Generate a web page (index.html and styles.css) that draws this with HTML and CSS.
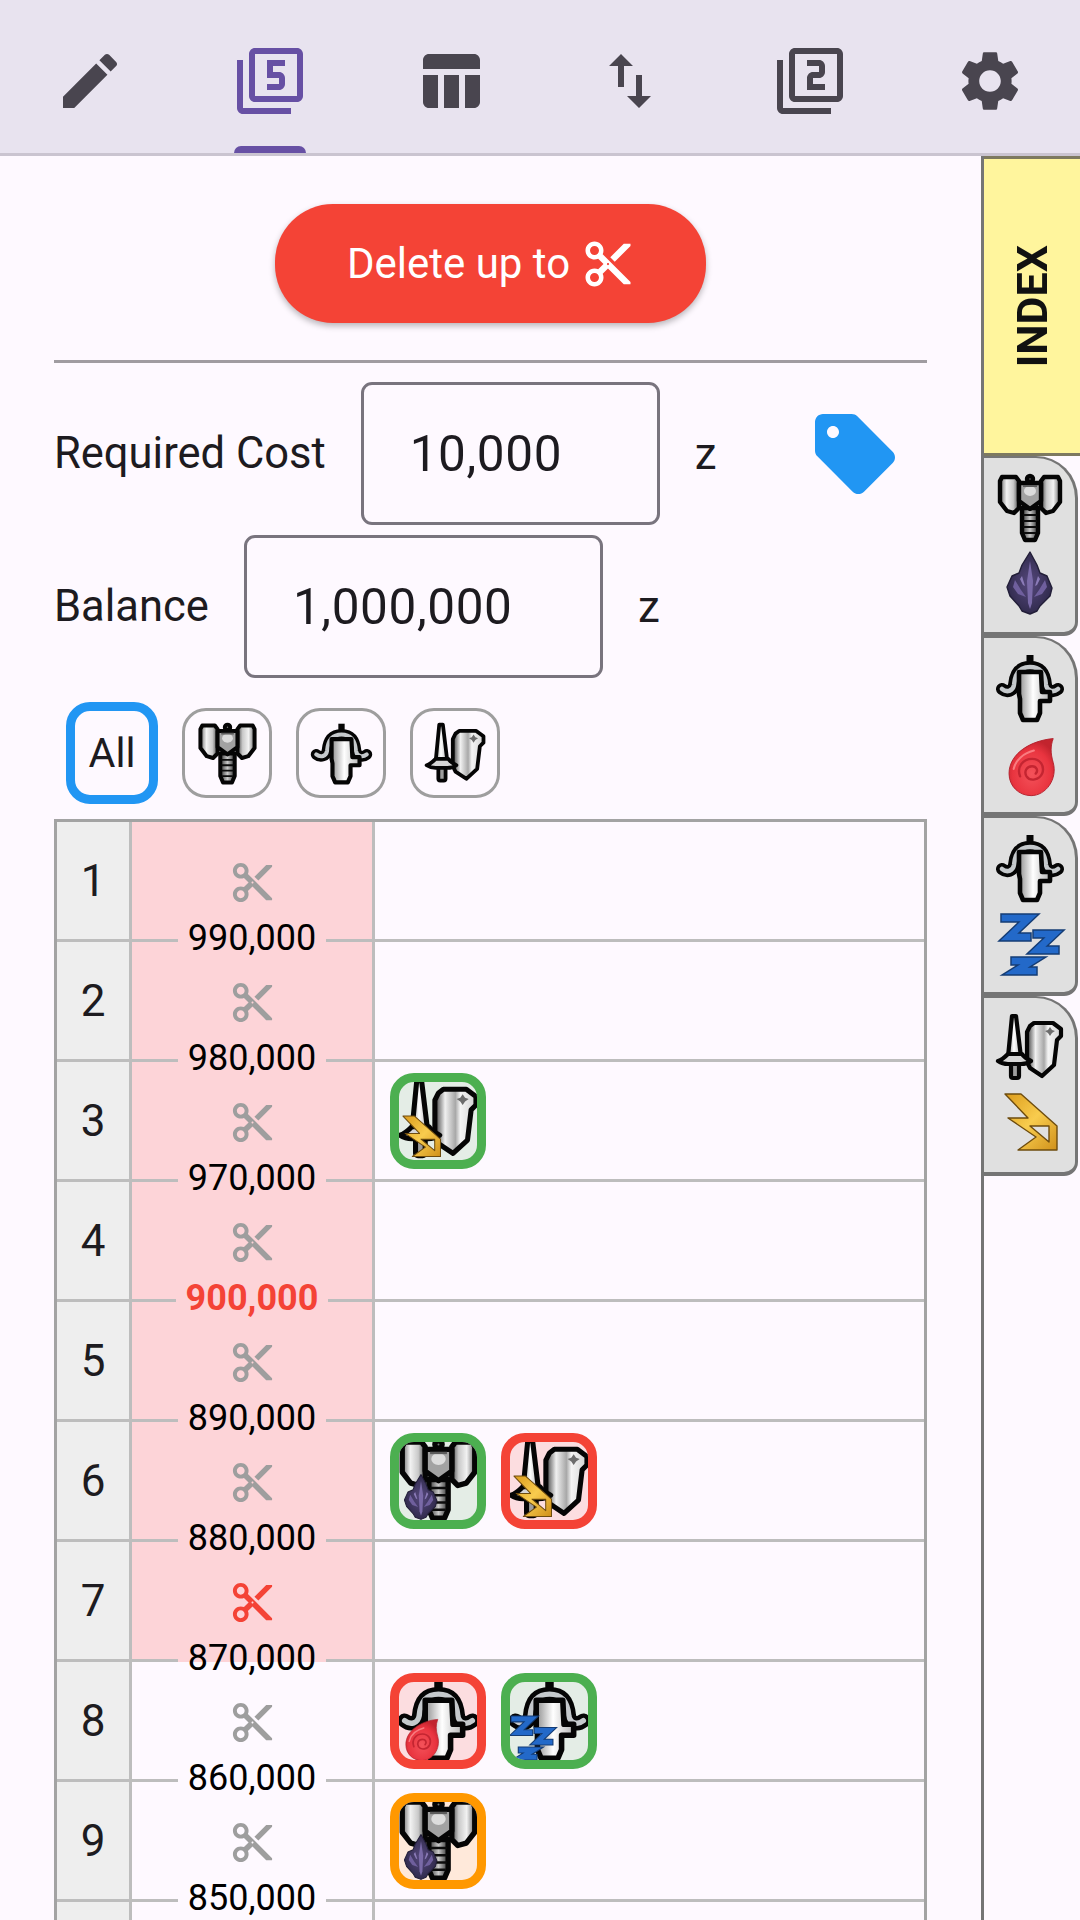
FILE: index.html
```html
<!DOCTYPE html>
<html lang="en">
<head>
<meta charset="utf-8">
<title>Delete up to</title>
<link rel="stylesheet" href="styles.css">
</head>
<body>
<svg class="defs" width="0" height="0" aria-hidden="true">
  <defs>
    <linearGradient id="gL" x1="0" x2="1" y1="0" y2="0"><stop offset="0" stop-color="#6a6a6a"/><stop offset=".35" stop-color="#f2f2f2"/><stop offset=".7" stop-color="#c9c9c9"/><stop offset="1" stop-color="#4a4a4a"/></linearGradient>
    <linearGradient id="gR" x1="1" x2="0" y1="0" y2="0"><stop offset="0" stop-color="#6a6a6a"/><stop offset=".35" stop-color="#f2f2f2"/><stop offset=".7" stop-color="#c9c9c9"/><stop offset="1" stop-color="#4a4a4a"/></linearGradient>
    <linearGradient id="gC" x1="0" x2="1" y1="0" y2="0"><stop offset="0" stop-color="#333"/><stop offset=".5" stop-color="#c8c8c8"/><stop offset="1" stop-color="#2c2c2c"/></linearGradient>
    <linearGradient id="gW" x1="0" x2="1" y1="0" y2="0"><stop offset="0" stop-color="#8f8f8f"/><stop offset=".45" stop-color="#fff"/><stop offset="1" stop-color="#b5b5b5"/></linearGradient>
    <linearGradient id="gS" x1="0" x2="1" y1="0" y2="0"><stop offset="0" stop-color="#3a3a3a"/><stop offset=".25" stop-color="#f0f0f0"/><stop offset=".5" stop-color="#a8a8a8"/><stop offset=".62" stop-color="#f4f4f4"/><stop offset="1" stop-color="#d2d2d2"/></linearGradient>
    <linearGradient id="gG" x1="0" x2="1" y1="0" y2="1"><stop offset="0" stop-color="#dc9c1c"/><stop offset=".5" stop-color="#f8cc4e"/><stop offset="1" stop-color="#d0901a"/></linearGradient>
    <radialGradient id="gF" cx=".5" cy=".62" r=".6"><stop offset="0" stop-color="#f4525a"/><stop offset=".7" stop-color="#e9343f"/><stop offset="1" stop-color="#c2242e"/></radialGradient>
    <radialGradient id="gK" cx=".5" cy=".5" r=".6"><stop offset="0" stop-color="#55487c"/><stop offset="1" stop-color="#2a2544"/></radialGradient>

    <symbol id="hammer" viewBox="0 0 72 72">
      <g stroke="#050505" stroke-width="4.4" stroke-linejoin="round">
        <path d="M28 36h16v25l-3 7h-10l-3-7z" fill="url(#gC)"/>
        <path d="M29 43h14M29 49h14M29 55h14M30 61h12" fill="none" stroke-width="2" stroke="#0c0c0c"/>
        <path d="M8 5h14l3 4v27l-5 5-7-2-7-9V9z" fill="url(#gL)"/>
        <path d="M64 5H50l-3 4v27l5 5 7-2 7-9V9z" fill="url(#gR)"/>
        <circle cx="36" cy="7" r="3" fill="#777"/>
        <path d="M25 11h22v18l-11 8-11-8z" fill="#a2a2a2"/>
      </g>
      <ellipse cx="36" cy="19" rx="6" ry="5" fill="#dcdcdc"/>
      <path d="M29 15h14v-2H29z" fill="#5c5c5c"/>
    </symbol>

    <symbol id="crossbow" viewBox="0 0 72 72">
      <path d="M36 3v14" stroke="#050505" stroke-width="7" fill="none"/>
      <path d="M8 37c5 4 11 2 12-4 1-12 6-18 16-18s15 6 16 18c1 6 7 8 12 4" fill="none" stroke="#050505" stroke-width="12" stroke-linecap="round"/>
      <path d="M8 37c5 4 11 2 12-4 1-12 6-18 16-18s15 6 16 18c1 6 7 8 12 4" fill="none" stroke="#c5c9cc" stroke-width="4.5" stroke-linecap="round"/>
      <path d="M25 20h22l1 20h8v9H46v12l-3 7H29l-3-7V47l-1-5z" fill="url(#gW)" stroke="#050505" stroke-width="4.6" stroke-linejoin="round"/>
    </symbol>

    <symbol id="swordshield" viewBox="0 0 72 72">
      <g stroke="#050505" stroke-width="4.2" stroke-linejoin="round">
        <path d="M36 14l4-3h19l8 6v7l-4 4-3 25-12 11-12-8-3-6V20z" fill="url(#gS)"/>
        <path d="M18 4h4l5 41H14z" fill="url(#gW)"/>
        <rect x="17" y="51" width="8" height="15" rx="2" fill="#9d9d9d"/>
        <path d="M4 49c4-1 8-5 10-7h14c2 3 5 5 9 7-4 3-8 3-10 3H14c-3 0-7-1-10-3z" fill="#d6d6d6"/>
      </g>
      <path d="M56 15l2 3 3 1-3 2-2 3-2-3-3-2 3-1z" fill="#6d6d6d"/>
    </symbol>

    <symbol id="crystal" viewBox="0 0 72 72">
      <path d="M36 5l7 13 3 8 7 3 5 12-2 8-10 10-3 5-7 3-8-3-3-5-9-10-3-9 5-11 7-3 3-8z" fill="url(#gK)" stroke="#221e38" stroke-width="1.4" stroke-linejoin="round"/>
      <path d="M36 14l3 20-1 22-2 6-2-6-1-22z" fill="#7a6aa8"/>
      <path d="M21 33l6 10 5 7-8-3-5-7zM51 33l-6 10-5 7 8-3 5-7z" fill="#6f5f9d"/>
      <path d="M28 29l3 10-2-1-3-6zM44 29l-3 10 2-1 3-6z" fill="#8b7bb8"/>
    </symbol>

    <symbol id="fire" viewBox="0 0 72 72">
      <g transform="translate(4 7) scale(.92)">
        <path d="M60 5c-3 8-3 16 0 26 5 18-8 36-24 36-13 0-24-10-24-24C12 21 36 7 60 5z" fill="url(#gF)" stroke="#b21f2a" stroke-width="1"/>
        <path d="M24 46c-4-10 3-19 13-19 9 0 14 8 11 16-3 7-13 9-17 3-3-5 0-11 6-11 5 0 7 5 4 8" fill="none" stroke="#c42531" stroke-width="2.6" stroke-linecap="round"/>
        <path d="M17 38c2-9 10-17 22-20" fill="none" stroke="#f97c80" stroke-width="2.2" stroke-linecap="round"/>
      </g>
    </symbol>

    <symbol id="sleep" viewBox="0 0 72 72">
      <g fill="none" stroke-linejoin="miter" stroke-linecap="square">
        <path d="M11 11h24L15 30h18M43 27h17L43 43h18M21 54h17L22 64h17" stroke="#143c74" stroke-width="9.5"/>
        <path d="M11 11h24L15 30h18M43 27h17L43 43h18M21 54h17L22 64h17" stroke="#2369c9" stroke-width="6.6"/>
      </g>
    </symbol>

    <symbol id="bolt" viewBox="0 0 72 72">
      <path d="M11 7h16l36 32v24H24l18-13L14 31h20zM36 39h19v16z" fill="url(#gG)" fill-rule="evenodd" stroke="#6e4c0e" stroke-width="1.4" stroke-linejoin="round"/>
    </symbol>

    <symbol id="cut" viewBox="0 0 24 24">
      <path d="M9.64 7.64c.23-.5.36-1.05.36-1.64 0-2.21-1.79-4-4-4S2 3.79 2 6s1.79 4 4 4c.59 0 1.14-.13 1.64-.36L10 12l-2.36 2.36C7.14 14.13 6.59 14 6 14c-2.21 0-4 1.79-4 4s1.79 4 4 4 4-1.79 4-4c0-.59-.13-1.14-.36-1.64L12 14l7 7h3v-1L9.64 7.64zM6 8c-1.1 0-2-.89-2-2s.9-2 2-2 2 .89 2 2-.9 2-2 2zm0 12c-1.1 0-2-.89-2-2s.9-2 2-2 2 .89 2 2-.9 2-2 2zm6-7.5c-.28 0-.5-.22-.5-.5s.22-.5.5-.5.5.22.5.5-.22.5-.5.5zM19 3l-6 6 2 2 7-7V3h-3z"/>
    </symbol>
  </defs>
</svg>

<header class="topbar">
  <div class="nav-item"><svg class="nav-icon" viewBox="0 0 24 24"><path d="M3 17.25V21h3.75L17.81 9.94l-3.75-3.75L3 17.25zM20.71 7.04c.39-.39.39-1.02 0-1.41l-2.34-2.34c-.39-.39-1.02-.39-1.41 0l-1.83 1.83 3.75 3.75 1.83-1.83z"/></svg></div>
  <div class="nav-item nav-active"><svg class="nav-icon" viewBox="0 0 24 24"><path d="M3 5H1v16c0 1.1.9 2 2 2h16v-2H3V5zm18-4H7c-1.1 0-2 .9-2 2v14c0 1.1.9 2 2 2h14c1.1 0 2-.9 2-2V3c0-1.1-.9-2-2-2zm0 16H7V3h14v14zm-4-4v-2c0-1.11-.9-2-2-2h-2V7h4V5h-6v6h4v2h-4v2h4c1.1 0 2-.89 2-2z"/></svg><span class="nav-indicator"></span></div>
  <div class="nav-item"><svg class="nav-icon" viewBox="0 0 24 24"><path d="M10 10.02h5V21h-5zM17 21h3c1.1 0 2-.9 2-2v-9h-5v11zm3-18H5c-1.1 0-2 .9-2 2v3h19V5c0-1.1-.9-2-2-2zM3 19c0 1.1.9 2 2 2h3V10H3v9z"/></svg></div>
  <div class="nav-item"><svg class="nav-icon" viewBox="0 0 24 24"><path d="M16 17.01V10h-2v7.01h-3L15 21l4-3.99h-3zM9 3L5 6.99h3V14h2V6.99h3L9 3z"/></svg></div>
  <div class="nav-item"><svg class="nav-icon" viewBox="0 0 24 24"><path d="M3 5H1v16c0 1.1.9 2 2 2h16v-2H3V5zm18-4H7c-1.1 0-2 .9-2 2v14c0 1.1.9 2 2 2h14c1.1 0 2-.9 2-2V3c0-1.1-.9-2-2-2zm0 16H7V3h14v14zm-4-4h-4v-2h2c1.1 0 2-.89 2-2V7c0-1.11-.9-2-2-2h-4v2h4v2h-2c-1.1 0-2 .89-2 2v4h6v-2z"/></svg></div>
  <div class="nav-item"><svg class="nav-icon" viewBox="0 0 24 24"><path d="M19.14 12.94c.04-.3.06-.61.06-.94 0-.32-.02-.64-.07-.94l2.03-1.58c.18-.14.23-.41.12-.61l-1.92-3.32c-.12-.22-.37-.29-.59-.22l-2.39.96c-.5-.38-1.03-.7-1.62-.94l-.36-2.54c-.04-.24-.24-.41-.48-.41h-3.84c-.24 0-.43.17-.47.41l-.36 2.54c-.59.24-1.13.57-1.62.94l-2.39-.96c-.22-.08-.47 0-.59.22L2.74 8.87c-.12.21-.08.47.12.61l2.03 1.58c-.05.3-.09.63-.09.94s.02.64.07.94l-2.03 1.58c-.18.14-.23.41-.12.61l1.92 3.32c.12.22.37.29.59.22l2.39-.96c.5.38 1.03.7 1.62.94l.36 2.54c.05.24.24.41.48.41h3.84c.24 0 .44-.17.47-.41l.36-2.54c.59-.24 1.13-.56 1.62-.94l2.39.96c.22.08.47 0 .59-.22l1.92-3.32c.12-.22.07-.47-.12-.61l-2.01-1.58zM12 15.6c-1.98 0-3.6-1.62-3.6-3.6s1.62-3.6 3.6-3.6 3.6 1.62 3.6 3.6-1.62 3.6-3.6 3.6z"/></svg></div>
</header>

<div class="main">
  <main class="content">
    <div class="action"><button class="delete-btn">Delete up to<svg class="delete-icon" viewBox="0 0 24 24"><use href="#cut"/></svg></button></div>
    <hr class="divider">
    <div class="field-row">
      <span class="field-label">Required Cost</span>
      <div class="field-box field-cost">10,000</div>
      <span class="field-unit">z</span>
      <svg class="tag-icon" viewBox="0 0 24 24"><path d="M21.41 11.41l-8.83-8.83c-.37-.37-.88-.58-1.41-.58H4c-1.1 0-2 .9-2 2v7.17c0 .53.21 1.04.59 1.41l8.83 8.83c.78.78 2.05.78 2.83 0l7.17-7.17c.78-.78.78-2.05-.01-2.83zM6.5 8C5.67 8 5 7.33 5 6.5S5.67 5 6.5 5 8 5.67 8 6.5 7.33 8 6.5 8z"/></svg>
    </div>
    <div class="field-row">
      <span class="field-label">Balance</span>
      <div class="field-box field-balance">1,000,000</div>
      <span class="field-unit">z</span>
    </div>
    <div class="chips">
      <div class="chip chip-all">All</div>
      <div class="chip"><svg class="chip-sprite"><use href="#hammer"/></svg></div>
      <div class="chip"><svg class="chip-sprite"><use href="#crossbow"/></svg></div>
      <div class="chip"><svg class="chip-sprite"><use href="#swordshield"/></svg></div>
    </div>

    <div class="table">
      <div class="row">
        <div class="num">1</div>
        <div class="mid mid-marked"><svg class="cut-icon" viewBox="0 0 24 24"><use href="#cut"/></svg><div class="value"><span>990,000</span></div></div>
        <div class="items"></div>
      </div>
      <div class="row">
        <div class="num">2</div>
        <div class="mid mid-marked"><svg class="cut-icon" viewBox="0 0 24 24"><use href="#cut"/></svg><div class="value"><span>980,000</span></div></div>
        <div class="items"></div>
      </div>
      <div class="row">
        <div class="num">3</div>
        <div class="mid mid-marked"><svg class="cut-icon" viewBox="0 0 24 24"><use href="#cut"/></svg><div class="value"><span>970,000</span></div></div>
        <div class="items">
          <div class="item item-green"><svg class="item-main"><use href="#swordshield"/></svg><svg class="item-sub"><use href="#bolt"/></svg></div>
        </div>
      </div>
      <div class="row">
        <div class="num">4</div>
        <div class="mid mid-marked"><svg class="cut-icon" viewBox="0 0 24 24"><use href="#cut"/></svg><div class="value value-strong"><span>900,000</span></div></div>
        <div class="items"></div>
      </div>
      <div class="row">
        <div class="num">5</div>
        <div class="mid mid-marked"><svg class="cut-icon" viewBox="0 0 24 24"><use href="#cut"/></svg><div class="value"><span>890,000</span></div></div>
        <div class="items"></div>
      </div>
      <div class="row">
        <div class="num">6</div>
        <div class="mid mid-marked"><svg class="cut-icon" viewBox="0 0 24 24"><use href="#cut"/></svg><div class="value"><span>880,000</span></div></div>
        <div class="items">
          <div class="item item-green"><svg class="item-main"><use href="#hammer"/></svg><svg class="item-sub"><use href="#crystal"/></svg></div>
          <div class="item item-red"><svg class="item-main"><use href="#swordshield"/></svg><svg class="item-sub"><use href="#bolt"/></svg></div>
        </div>
      </div>
      <div class="row">
        <div class="num">7</div>
        <div class="mid mid-marked"><svg class="cut-icon cut-red" viewBox="0 0 24 24"><use href="#cut"/></svg><div class="value"><span>870,000</span></div></div>
        <div class="items"></div>
      </div>
      <div class="row">
        <div class="num">8</div>
        <div class="mid"><svg class="cut-icon" viewBox="0 0 24 24"><use href="#cut"/></svg><div class="value"><span>860,000</span></div></div>
        <div class="items">
          <div class="item item-red"><svg class="item-main"><use href="#crossbow"/></svg><svg class="item-sub"><use href="#fire"/></svg></div>
          <div class="item item-green"><svg class="item-main"><use href="#crossbow"/></svg><svg class="item-sub"><use href="#sleep"/></svg></div>
        </div>
      </div>
      <div class="row">
        <div class="num">9</div>
        <div class="mid"><svg class="cut-icon" viewBox="0 0 24 24"><use href="#cut"/></svg><div class="value"><span>850,000</span></div></div>
        <div class="items">
          <div class="item item-orange"><svg class="item-main"><use href="#hammer"/></svg><svg class="item-sub"><use href="#crystal"/></svg></div>
        </div>
      </div>
      <div class="row">
        <div class="num"></div>
        <div class="mid"></div>
        <div class="items"></div>
      </div>
    </div>
  </main>

  <aside class="rail">
    <div class="tab-index"><span>INDEX</span></div>
    <div class="tab"><svg class="tab-sprite"><use href="#hammer"/></svg><svg class="tab-sprite"><use href="#crystal"/></svg></div>
    <div class="tab"><svg class="tab-sprite"><use href="#crossbow"/></svg><svg class="tab-sprite"><use href="#fire"/></svg></div>
    <div class="tab"><svg class="tab-sprite"><use href="#crossbow"/></svg><svg class="tab-sprite"><use href="#sleep"/></svg></div>
    <div class="tab"><svg class="tab-sprite"><use href="#swordshield"/></svg><svg class="tab-sprite"><use href="#bolt"/></svg></div>
  </aside>
</div>
</body>
</html>
```
FILE: styles.css
```css
* { box-sizing: border-box; }
html, body {
  margin: 0;
  height: 1920px;
  overflow: hidden;
  background: #fef9ff;
  color: #1d1b20;
  font-family: Roboto, "Liberation Sans", sans-serif;
}
.defs { position: absolute; }

.topbar {
  display: flex;
  height: 156px;
  background: #e8e3ef;
  border-bottom: 3px solid #cac4d0;
}
.nav-item {
  position: relative;
  flex: 1;
  display: flex;
  justify-content: center;
  padding-top: 45px;
}
.nav-icon { width: 72px; height: 72px; fill: #49454f; }
.nav-active .nav-icon { fill: #6750a4; }
.nav-indicator {
  position: absolute;
  left: 54px;
  bottom: 0;
  width: 72px;
  height: 7px;
  background: #6750a4;
  border-radius: 9px 9px 0 0;
}

.main { display: flex; height: 1764px; }
.content { width: 981px; padding: 0 54px; flex: none; overflow: hidden; }
.rail {
  width: 99px;
  flex: none;
  border-left: 3px solid #757575;
}

.action { display: flex; justify-content: center; padding-top: 48px; }
.delete-btn {
  display: flex;
  align-items: center;
  gap: 11px;
  height: 119px;
  padding: 0 71px 0 72px;
  border: 0;
  border-radius: 58px;
  background: #f44336;
  color: #fff;
  font: 400 42px Roboto, sans-serif;
  box-shadow: 0 3px 6px rgba(0, 0, 0, .28);
}
.delete-icon { width: 54px; height: 54px; fill: #fff; }

.divider {
  height: 3px;
  margin: 37px 0 19px;
  border: 0;
  background: #a09ca1;
}

.field-row {
  display: flex;
  align-items: center;
  gap: 35px;
  margin-bottom: 10px;
}
.field-label { font-size: 43.5px; }
.field-unit { font-size: 44px; }
.field-box {
  height: 143px;
  padding-left: 46px;
  display: flex;
  align-items: center;
  border: 3px solid #79747e;
  border-radius: 11px;
  font-size: 49.5px;
  letter-spacing: .6px;
}
.field-cost { width: 299px; }
.field-balance { width: 359px; }
.tag-icon {
  width: 96px;
  height: 96px;
  margin-left: auto;
  margin-right: 24px;
  fill: #2196f3;
}

.chips {
  display: flex;
  align-items: center;
  gap: 24px;
  margin-top: 24px;
  margin-bottom: 15px;
  padding-left: 12px;
}
.chip {
  width: 90px;
  height: 90px;
  display: flex;
  align-items: center;
  justify-content: center;
  border: 3px solid #9e9e9e;
  border-radius: 24px;
}
.chip-all {
  width: 92px;
  height: 102px;
  border: 9px solid #2196f3;
  font-size: 41.25px;
}
.chip-sprite { width: 65px; height: 65px; filter: blur(.3px); }

.table {
  border: 3px solid #a3a3a3;
  border-bottom: 0;
}
.row {
  display: grid;
  grid-template-columns: 75px 243px 1fr;
  height: 120px;
}
.num {
  display: flex;
  align-items: center;
  justify-content: center;
  background: #eeeeee;
  border-right: 3px solid #bdbdbd;
  border-bottom: 3px solid #bdbdbd;
  font-size: 44px;
}
.mid {
  position: relative;
  display: flex;
  align-items: center;
  justify-content: center;
  border-right: 3px solid #bdbdbd;
}
.mid-marked { background: #fdd4d8; }
.cut-icon { width: 47px; height: 47px; fill: #9e9e9e; }
.cut-red { fill: #f44336; }
.value {
  position: absolute;
  z-index: 1;
  left: 0;
  right: 0;
  bottom: -18px;
  height: 40px;
  display: flex;
  align-items: center;
  color: #000;
  font-size: 36px;
}
.value::before, .value::after {
  content: "";
  flex: 1;
  height: 3px;
  background: #bdbdbd;
}
.value span { padding: 0 10px 4px; line-height: 36px; }
.value-strong { color: #f44336; font-weight: 700; }

.items {
  display: flex;
  align-items: center;
  gap: 15px;
  padding-left: 15px;
  border-bottom: 3px solid #bdbdbd;
}
.item {
  position: relative;
  width: 96px;
  height: 96px;
  border: 9px solid;
  border-radius: 24px;
  overflow: hidden;
}
.item-green { border-color: #4caf50; background: #e4ede6; }
.item-red { border-color: #f44336; background: #fcdde0; }
.item-orange { border-color: #ff9800; background: #ffe9da; }
.item-main {
  position: absolute;
  left: -4px;
  top: -6px;
  width: 87px;
  height: 87px;
  filter: blur(.3px);
}
.item-sub {
  position: absolute;
  left: -4px;
  bottom: -3px;
  width: 52px;
  height: 52px;
  filter: blur(.3px);
}

.tab-index {
  height: 300px;
  display: flex;
  align-items: center;
  justify-content: center;
  background: #fff59d;
  border-top: 3px solid #7d7960;
  border-bottom: 3px solid #7d7960;
}
.tab-index span {
  writing-mode: vertical-rl;
  transform: rotate(180deg);
  color: #111;
  font-size: 43px;
  font-weight: 700;
}
.tab {
  width: 94px;
  height: 180px;
  display: flex;
  flex-direction: column;
  align-items: center;
  justify-content: center;
  gap: 3px;
  background: #e0e0e0;
  border: 3px solid #757575;
  border-width: 2px 3px 4px 0;
  border-radius: 0 42px 14px 0;
}
.tab-sprite { width: 72px; height: 72px; flex: none; filter: blur(.3px); }
```
